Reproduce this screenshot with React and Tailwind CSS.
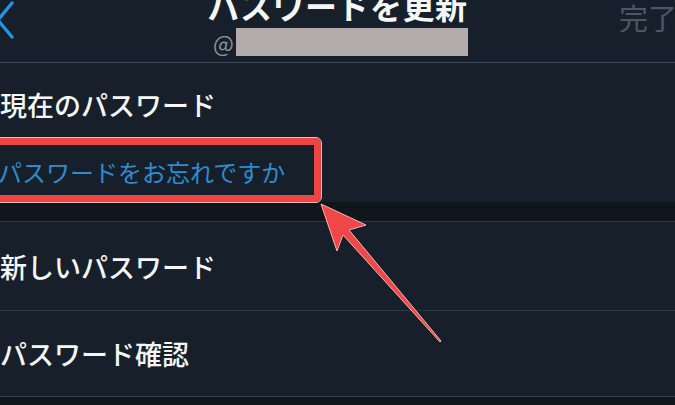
import React from 'react';

const jp = { fontFamily: '"Noto Sans CJK JP", "Noto Sans", sans-serif' };

function BackChevron() {
    return (
        <svg width="16" height="40" viewBox="0 0 16 40" className="block">
            <polyline points="12,3 -2,20 12,37" fill="none" stroke="#1f98e8" strokeWidth="3.2" strokeLinecap="round" strokeLinejoin="round" />
        </svg>
    );
}

function PointerArrow() {
    // annotation drawn over the page
    return (
        <svg className="absolute left-0 top-0 pointer-events-none" width="675" height="405" viewBox="0 0 675 405">
            <polygon
                points="321,204 366,225 349,230 441,341 440,342 343,235 337,251"
                fill="#f04848" stroke="#f6b4b4" strokeWidth="1" strokeLinejoin="round" />
        </svg>
    );
}

export default function App() {
    return (
        <div className="relative w-[675px] h-[405px] overflow-hidden bg-[#17202a] text-[#f4f6f8]" style={jp}>

            {/* Header */}
            <div className="h-[63px] grid grid-cols-[1fr_auto_1fr] border-b border-[#3a4956]">
                <div className="flex items-start">
                    <BackChevron />
                </div>
                <div className="flex flex-col items-center -mt-[11px]">
                    <h1 className="text-[32px] leading-[32px] font-bold tracking-[0.5px]">パスワードを更新</h1>
                    <div className="flex items-center mt-[7px] h-[28px] ml-[6px]">
                        <span className="text-[22px] leading-[28px] text-[#8a939c]">@</span>
                        <div className="ml-[2px] w-[232px] h-[28px] bg-[#b3abab]" />
                    </div>
                </div>
                <div className="flex justify-end items-start pt-[1px] -mr-[2px]">
                    <span className="text-[29px] leading-[32px] text-[#4d5663]">完了</span>
                </div>
            </div>

            {/* Current password */}
            <div className="pt-[28px]">
                <p className="text-[27px] leading-[27px] font-medium">現在のパスワード</p>
                <div className="mt-[20px] -ml-[10px] w-[331px] h-[64px] border-[7px] border-[#ef4444] rounded-[5px] outline outline-1 outline-[#f3b8b8] flex items-center pl-[1px] pt-[4px]">
                    <span className="text-[24px] leading-[24px] text-[#2d8ccf]">パスワードをお忘れですか</span>
                </div>
            </div>

            {/* section gap */}
            <div className="h-[20px] bg-[#11161d] border-b border-[#2d3843]" />

            {/* New password */}
            <div className="h-[89px] flex items-center border-b border-[#2d3843]">
                <p className="text-[27px] leading-[27px] font-medium">新しいパスワード</p>
            </div>

            {/* Confirm */}
            <div className="h-[86px] flex items-center border-b border-[#36424d]">
                <p className="text-[27px] leading-[27px] font-medium">パスワード確認</p>
            </div>
            <div className="h-[10px] bg-[#11161d]" />

            <PointerArrow />
        </div>
    );
}
